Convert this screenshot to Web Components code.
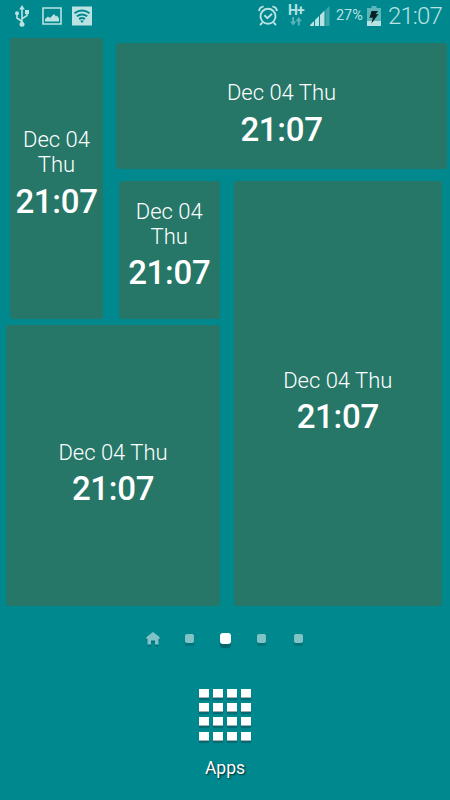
<!DOCTYPE html>
<html lang="en">
<head>
<meta charset="utf-8">
<title>Home screen</title>
<style>
  html, body {
    margin: 0;
    height: 100%;
  }

  body {
    background: #00888f;
    color: #fff;
    font-family: Roboto, "Open Sans", sans-serif;
    overflow: hidden;
  }
</style>
</head>
<body>
<home-screen>
  <status-bar slot="status" network="H+" battery="27%" time="21:07"></status-bar>
  <widget-board slot="board">
    <clock-widget class="tall" date="Dec 04 Thu" time="21:07"></clock-widget>
    <clock-widget class="wide" date="Dec 04 Thu" time="21:07"></clock-widget>
    <clock-widget class="small" date="Dec 04 Thu" time="21:07"></clock-widget>
    <clock-widget class="large" date="Dec 04 Thu" time="21:07"></clock-widget>
    <clock-widget class="square" date="Dec 04 Thu" time="21:07"></clock-widget>
  </widget-board>
  <page-dots slot="pager" pages="4" active="1"></page-dots>
  <app-launcher slot="dock">Apps</app-launcher>
</home-screen>

<script>
  function defineComponent(name, html, setup) {
    const template = document.createElement("template");
    template.innerHTML = html;

    customElements.define(name, class extends HTMLElement {
      constructor() {
        super();
        this.attachShadow({ mode: "open" });
        this.shadowRoot.appendChild(template.content.cloneNode(true));
      }

      connectedCallback() {
        if (setup) setup(this, this.shadowRoot);
      }
    });
  }

  defineComponent("home-screen", `
    <style>
      :host {
        display: grid;
        grid-template-rows: 32px 578px 57px 133px;
        width: 450px;
        height: 800px;
      }
    </style>
    <slot name="status"></slot>
    <slot name="board"></slot>
    <slot name="pager"></slot>
    <slot name="dock"></slot>
  `);

  defineComponent("status-bar", `
    <style>
      :host {
        display: flex;
        justify-content: space-between;
        color: #b9e2e3;
        padding: 0 8px 0 14px;
      }
      .group {
        display: flex;
        align-items: center;
        height: 32px;
      }
      svg {
        display: block;
        flex: none;
      }
      .usb { margin-right: 12px; }
      .image { margin-right: 10px; }
      .alarm { margin-right: 10px; }
      .network {
        width: 17px;
        height: 25px;
        margin-right: 5px;
      }
      .network span {
        display: block;
        font-size: 14px;
        font-weight: 700;
        letter-spacing: -.8px;
        line-height: 13px;
      }
      .signal { margin-right: 6px; }
      .battery {
        font-size: 14.400px;
        line-height: 32px;
        width: 31px;
        white-space: nowrap;
      }
      .cell { margin-right: 7px; }
      .time {
        font-size: 24px;
        font-weight: 300;
        letter-spacing: -.9px;
        line-height: 32px;
        width: 54px;
        white-space: nowrap;
      }
    </style>
    <div class="group">
      <svg class="usb" width="16" height="24" viewBox="0 0 16 24" fill="none" stroke="currentColor" stroke-width="1.6">
        <path d="M8 4v16M8 17.500 3 14V10M8 14.800l5-3.300V8"/>
        <path d="M8 1 5.200 5.500h5.600z" fill="currentColor" stroke="none"/>
        <circle cx="8" cy="20.300" r="2.500" fill="currentColor" stroke="none"/>
        <circle cx="3" cy="9.300" r="2" fill="currentColor" stroke="none"/>
        <path d="M11 6h4v4h-4z" fill="currentColor" stroke="none"/>
      </svg>
      <svg class="image" width="20" height="18" viewBox="0 0 20 18">
        <path d="M1 1h18v16H1z" fill="none" stroke="currentColor" stroke-width="1.6"/>
        <path d="M3 14.500v-2.500l3-2.500 2 1.500 4-4 2 2.500 1-1 2 3v3z" fill="currentColor"/>
      </svg>
      <svg class="wifi" width="20" height="20" viewBox="0 0 20 20">
        <path d="M0 .5h20v19H0z" fill="currentColor"/>
        <g fill="none" stroke="#00888f" stroke-width="2">
          <path d="M2.500 7.300q7.500-5.400 15 0M4.800 10.300q5.200-3.700 10.400 0M7.100 13.100q2.900-2.200 5.800 0"/>
        </g>
        <path d="M8.200 14.800q1.800-1.200 3.600 0L10 17z" fill="#00888f"/>
      </svg>
    </div>
    <div class="group">
      <svg class="alarm" width="20" height="22" viewBox="0 0 20 22" fill="none" stroke="currentColor" stroke-width="1.900">
        <circle cx="10" cy="11.300" r="7.500"/>
        <path d="M6.400 10.200 9.400 13.100 14 8.800" stroke-width="1.900"/>
        <path d="M1 6Q1.500 2.300 5.600 1.400M19 6Q18.500 2.300 14.400 1.400M4.500 17.300 2 20.100M15.500 17.300 18 20.100"/>
      </svg>
      <div class="network">
        <span></span>
        <svg width="16" height="9" viewBox="0 0 16 9" fill="#5bb5b9">
          <path d="M4.200 0h1.900v4.500H8.300L5.200 8.600 2 4.500h2.200zM9.800 8.600h1.900V4.200h2.200L10.700 0 7.600 4.200h2.200z"/>
        </svg>
      </div>
      <svg class="signal" width="20" height="20" viewBox="0 0 20 20">
        <path d="M0 20v-1L4 15v5zM5 20v-6l4-4v10zM10 20V9l4.500-4.500V20z" fill="currentColor"/>
        <path d="M15.500 20V4L19.500 0v20z" fill="#3da5aa"/>
      </svg>
      <span class="battery"></span>
      <svg class="cell" width="14" height="20" viewBox="0 0 14 20">
        <path d="M0 2h4.500V0h5v2H14v13H0z" fill="#5bb5b9"/>
        <path d="M0 15h14v5H0z" fill="currentColor"/>
        <path d="M4.500 5h6.500L8.500 8.500 11.500 8 4.500 17.500l1.300-6L2.500 12z" fill="#061f23"/>
      </svg>
      <span class="time"></span>
    </div>
  `, (host, root) => {
    root.querySelector(".network span").textContent = host.getAttribute("network");
    root.querySelector(".battery").textContent = host.getAttribute("battery");
    root.querySelector(".time").textContent = host.getAttribute("time");
  });

  defineComponent("widget-board", `
    <style>
      :host {
        display: grid;
        grid-template-columns: 110px 116px 224px;
        grid-template-rows: 143px 147px 288px;
      }
      ::slotted(.tall) {
        grid-area: 1 / 1 / 3 / 2;
        margin: 6px 7px 3px 10px;
        --date-gap: 1.500px;
      }
      ::slotted(.wide) {
        grid-area: 1 / 2 / 2 / 4;
        margin: 11px 3px 6px 6px;
        --time-gap: 5px;
      }
      ::slotted(.small) { grid-area: 2 / 2 / 3 / 3; margin: 6px 6px 3px 8.500px; }
      ::slotted(.large) { grid-area: 2 / 3 / 4 / 4; margin: 6px 8px 4px 7.500px; }
      ::slotted(.square) { grid-area: 3 / 1 / 4 / 3; margin: 3px 6px 4px 6px; }
    </style>
    <slot></slot>
  `);

  defineComponent("clock-widget", `
    <style>
      :host {
        display: grid;
        grid-template-rows: 1fr 1fr;
        background: #267768;
        border-radius: 3px;
        text-align: center;
      }
      .date {
        align-self: end;
        padding-bottom: var(--date-gap, 1px);
        font-size: 22px;
        font-weight: 300;
        line-height: 25px;
      }
      .time {
        padding-top: var(--time-gap, 4px);
        font-size: 33px;
        font-weight: 500;
        letter-spacing: -.3px;
        line-height: 38px;
      }
    </style>
    <div class="date"></div>
    <div class="time"></div>
  `, (host, root) => {
    root.querySelector(".date").textContent = host.getAttribute("date");
    root.querySelector(".time").textContent = host.getAttribute("time");
  });

  defineComponent("page-dots", `
    <style>
      :host {
        display: grid;
        grid-template-columns: repeat(5, 36.300px);
        justify-content: center;
        justify-items: center;
        align-items: center;
        height: 57px;
        padding-left: 1px;
      }
      svg {
        display: block;
        filter: drop-shadow(0 2px 0 #007279);
      }
      i {
        width: 9px;
        height: 9px;
        border-radius: 2px;
        background: #80c3c7;
        box-shadow: 0 2.500px 1px #00747b;
      }
      i.active {
        width: 11px;
        height: 11px;
        border-radius: 3px;
        background: #fff;
        box-shadow: 0 3.500px 1px #00666c;
      }
    </style>
    <svg width="14" height="13" viewBox="0 0 14 13">
      <path d="M7 0 13.500 5v2H12.500v5.500H9V8.500H5v4H1.500V7H.5V5z" fill="#80c3c7"/>
    </svg>
  `, (host, root) => {
    const active = Number(host.getAttribute("active"));
    for (let i = 0; i < Number(host.getAttribute("pages")); i++) {
      const dot = document.createElement("i");
      if (i === active) dot.className = "active";
      root.appendChild(dot);
    }
  });

  defineComponent("app-launcher", `
    <style>
      :host {
        display: flex;
        flex-direction: column;
        align-items: center;
        padding-top: 22px;
      }
      .grid {
        display: grid;
        grid-template-columns: repeat(4, 10px);
        grid-auto-rows: 8px;
        gap: 6.200px 4.200px;
      }
      .grid i {
        background: #fff;
        box-shadow: 0 1px 0 #a4adad, 0 3px 1px #006b72;
      }
      .label {
        margin-top: 17px;
        font-size: 17.500px;
        line-height: 22px;
        text-shadow: 1px 1px 2px rgba(0, 0, 0, .7);
      }
    </style>
    <div class="grid"></div>
    <div class="label"><slot></slot></div>
  `, (host, root) => {
    const grid = root.querySelector(".grid");
    for (let i = 0; i < 16; i++) {
      grid.appendChild(document.createElement("i"));
    }
  });
</script>
</body>
</html>
